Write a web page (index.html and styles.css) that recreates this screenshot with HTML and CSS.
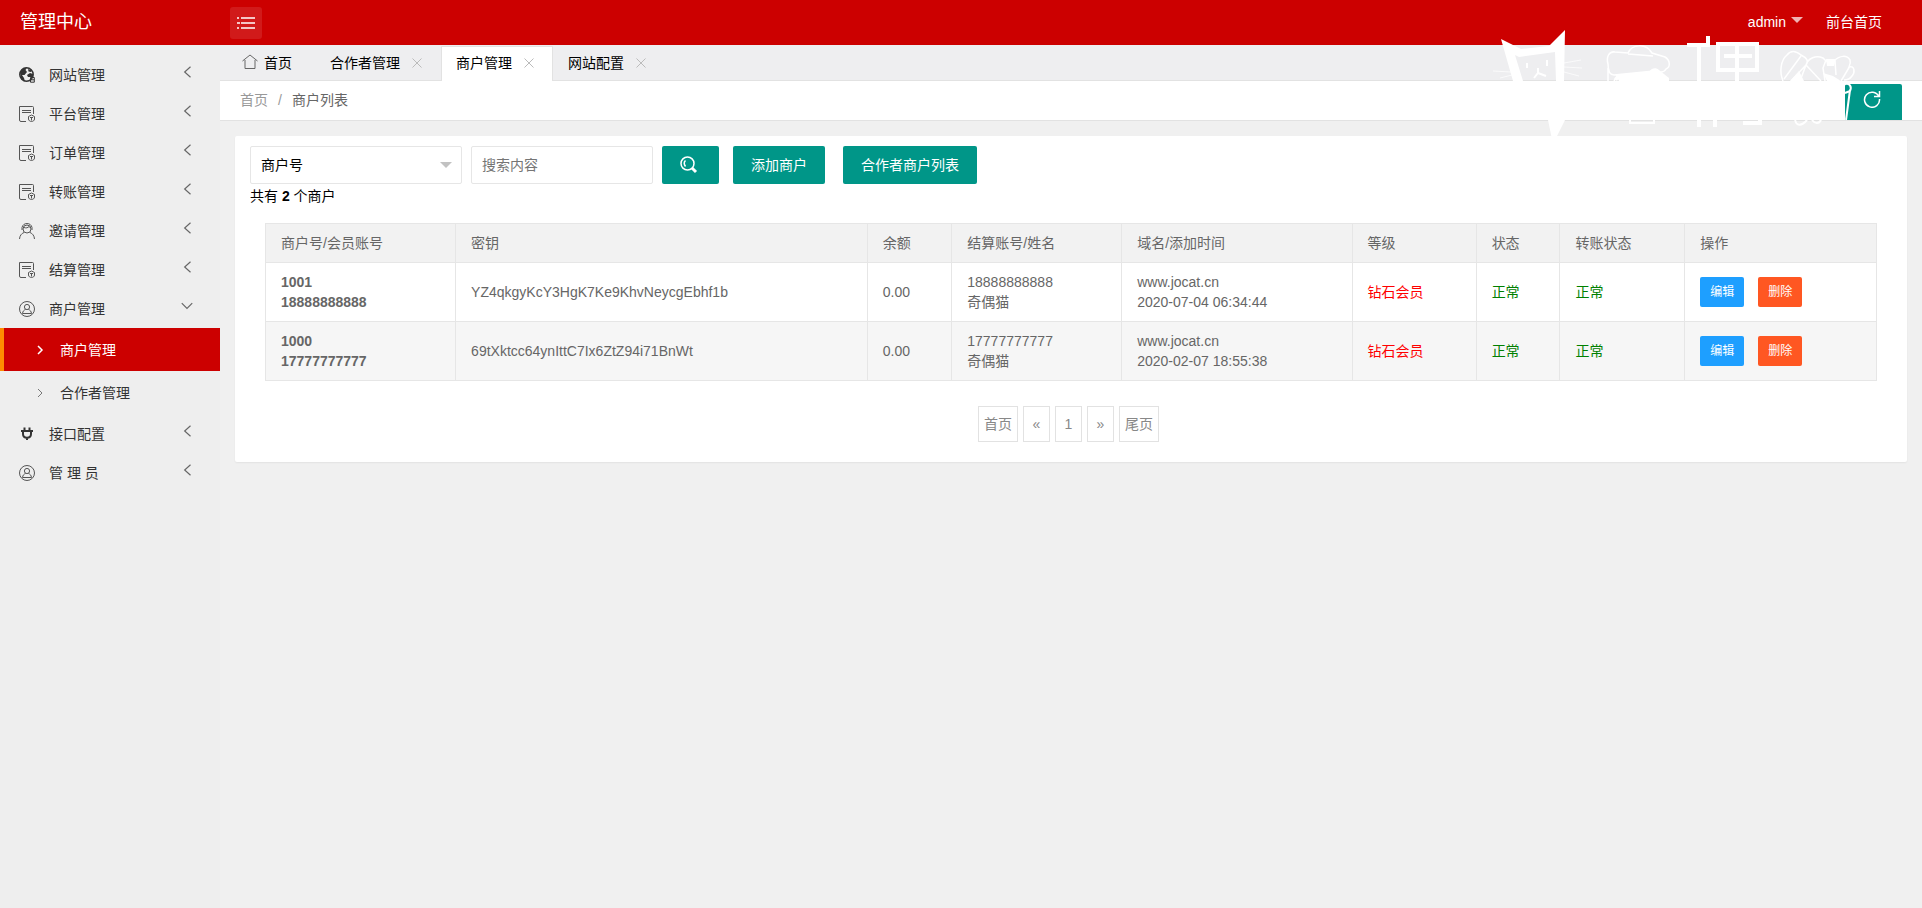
FILE: index.html
```html
<!DOCTYPE html>
<html lang="zh-CN">
<head>
<meta charset="utf-8">
<title>管理中心</title>
<link rel="stylesheet" href="styles.css">
</head>
<body>
<svg class="defs" width="0" height="0" aria-hidden="true">
  <symbol id="i-form" viewBox="0 0 16 16"><path d="M7 15.500H2A1.500 1.500 0 0 1 .5 14V.5h13a1 1 0 0 1 1 1V8M3 4.500h9M3 6.500h9"/><path d="M9.500 10.500 12.500 9l3 1.500v2.500c0 1.500-1.500 2.500-3 2.500s-3-1-3-2.500zM11 11.500h3M12.500 11.500v3"/></symbol>
  <symbol id="i-user" viewBox="0 0 16 16"><circle cx="8" cy="8" r="7.500"/><circle cx="8" cy="6" r="2.600"/><path d="M3.500 12.500c.3-2.300 1.500-3.500 3-4M12.500 12.500c-.3-2.300-1.500-3.500-3-4M3.500 12.500h9"/></symbol>
  <symbol id="i-left" viewBox="0 0 12 12"><path d="M9 1.500 4 6l5 4.500"/></symbol>
  <symbol id="i-down" viewBox="0 0 12 12"><path d="M1.500 3.500 6 8l4.500-4.500"/></symbol>
  <symbol id="i-right" viewBox="0 0 12 12"><path d="M4 2l4 4-4 4"/></symbol>
  <symbol id="i-close" viewBox="0 0 10 10"><path d="M.5.5l9 9M9.500.5l-9 9"/></symbol>
</svg>
<header class="header">
  <a class="logo" href="#">管理中心</a>
  <button class="menu-toggle" type="button" aria-label="切换菜单"><svg width="18" height="12" viewBox="0 0 18 12"><path d="M0 1h2M4 1h14M0 6h3M4 6h14M0 11h2M4 11h14"/></svg></button>
  <nav class="header-nav">
    <a class="account" href="#">admin<span class="caret caret-light"></span></a>
    <a href="#">前台首页</a>
  </nav>
</header>
<div class="shell">
  <nav class="sidebar">
    <a class="item" href="#"><svg class="icon dark" viewBox="0 0 16 16"><circle cx="7.500" cy="7.500" r="6.700" stroke-width="1.500"/><path class="solid" d="M1 5l3-3.500L8 .5 6.500 3 8 5 5.500 8 3 8 5 11l1 3.500L2 12zM9 2l4 1.500L12 5 9.500 4.500zM8 8l3-2 3 1v3H9z"/><path d="M11.500 10.500h3.800v4.700h-3.800zM12 12.800h3"/></svg><span>网站管理</span><svg class="arrow"><use href="#i-left"/></svg></a>
    <a class="item" href="#"><svg class="icon"><use href="#i-form"/></svg><span>平台管理</span><svg class="arrow"><use href="#i-left"/></svg></a>
    <a class="item" href="#"><svg class="icon"><use href="#i-form"/></svg><span>订单管理</span><svg class="arrow"><use href="#i-left"/></svg></a>
    <a class="item" href="#"><svg class="icon"><use href="#i-form"/></svg><span>转账管理</span><svg class="arrow"><use href="#i-left"/></svg></a>
    <a class="item" href="#"><svg class="icon" viewBox="0 0 16 16"><path d="M.5 16c.3-3.500 2-5.500 4.500-6.500M15.500 16c-.3-3.500-2-5.500-4.500-6.500"/><circle cx="8" cy="6" r="4"/><path d="M3 7V4.500C3.500 2 5.500.5 8 .5s4.500 1.500 5 4V7M5 4.500c2 .8 4 .3 5-1l1.500 1.500"/></svg><span>邀请管理</span><svg class="arrow"><use href="#i-left"/></svg></a>
    <a class="item" href="#"><svg class="icon"><use href="#i-form"/></svg><span>结算管理</span><svg class="arrow"><use href="#i-left"/></svg></a>
    <a class="item" href="#"><svg class="icon"><use href="#i-user"/></svg><span>商户管理</span><svg class="arrow"><use href="#i-down"/></svg></a>
    <a class="subitem current" href="#"><svg class="chevron"><use href="#i-right"/></svg><span>商户管理</span></a>
    <a class="subitem" href="#"><svg class="chevron"><use href="#i-right"/></svg><span>合作者管理</span></a>
    <a class="item" href="#"><svg class="icon dark" viewBox="0 0 16 16"><path class="plug" d="M2 5h12M5.500 1.500V5M10.500 1.500V5M4 5v3c0 2.500 1.500 3.700 4 3.700s4-1.200 4-3.700V5M8 11.500V14"/></svg><span>接口配置</span><svg class="arrow"><use href="#i-left"/></svg></a>
    <a class="item" href="#"><svg class="icon"><use href="#i-user"/></svg><span>管 理 员</span><svg class="arrow"><use href="#i-left"/></svg></a>
  </nav>
  <main class="main">
    <div class="tabs">
      <a class="tab tab-home" href="#"><svg class="home" viewBox="0 0 16 16"><path d="M.5 7 8 1l7.500 6M3 6v8.500h10V6"/></svg>首页</a>
      <a class="tab" href="#">合作者管理<svg class="close"><use href="#i-close"/></svg></a>
      <a class="tab active" href="#">商户管理<svg class="close"><use href="#i-close"/></svg></a>
      <a class="tab" href="#">网站配置<svg class="close"><use href="#i-close"/></svg></a>
    </div>
    <div class="crumbs">
      <a href="#">首页</a><span class="slash">/</span><span class="here">商户列表</span>
      <button class="btn refresh" type="button" aria-label="刷新"><svg width="18" height="18" viewBox="0 0 18 18"><path d="M15.800 6.500A7.500 7.500 0 1 0 16.500 9M16.500 1v5.500H11"/></svg></button>
    </div>
    <section class="card">
      <form class="search">
        <span class="select-wrap"><select aria-label="搜索类型"><option>商户号</option></select><span class="caret"></span></span>
        <input type="text" placeholder="搜索内容" aria-label="搜索内容">
        <button class="btn btn-search" type="button" aria-label="搜索"><svg width="18" height="18" viewBox="0 0 18 18"><circle cx="7.500" cy="7.500" r="6.500"/><path d="M5.500 4.500C4 6 4 8.500 5.500 10.500"/><path class="handle" d="M12 12l4 4"/></svg></button>
        <button class="btn btn-add" type="button">添加商户</button>
        <button class="btn btn-list" type="button">合作者商户列表</button>
      </form>
      <p class="total">共有 <b>2</b> 个商户</p>
      <table>
        <colgroup><col class="c-id"><col class="c-key"><col class="c-money"><col class="c-account"><col class="c-domain"><col class="c-level"><col class="c-state"><col class="c-transfer"><col></colgroup>
        <thead><tr><th>商户号/会员账号</th><th>密钥</th><th>余额</th><th>结算账号/姓名</th><th>域名/添加时间</th><th>等级</th><th>状态</th><th>转账状态</th><th>操作</th></tr></thead>
        <tbody>
          <tr><td><b>1001<br>18888888888</b></td><td>YZ4qkgyKcY3HgK7Ke9KhvNeycgEbhf1b</td><td>0.00</td><td>18888888888<br>奇偶猫</td><td>www.jocat.cn<br>2020-07-04 06:34:44</td><td class="red">钻石会员</td><td class="green">正常</td><td class="green">正常</td><td><div class="ops"><button class="op edit" type="button">编辑</button><button class="op delete" type="button">删除</button></div></td></tr>
          <tr><td><b>1000<br>17777777777</b></td><td>69tXktcc64ynIttC7Ix6ZtZ94i71BnWt</td><td>0.00</td><td>17777777777<br>奇偶猫</td><td>www.jocat.cn<br>2020-02-07 18:55:38</td><td class="red">钻石会员</td><td class="green">正常</td><td class="green">正常</td><td><div class="ops"><button class="op edit" type="button">编辑</button><button class="op delete" type="button">删除</button></div></td></tr>
        </tbody>
      </table>
      <nav class="pager" aria-label="分页"><a href="#">首页</a><a href="#">«</a><a href="#">1</a><a href="#">»</a><a href="#">尾页</a></nav>
    </section>
  </main>
</div>
<svg class="mascot" width="372" height="130" viewBox="0 0 372 130" aria-hidden="true">
  <path class="fill" fill-rule="evenodd" d="M11 19 31 29 59 26 75 10 74 61 75 100 63 124 58 100 40 64 23 61zM25 35 33 61H66L65 32 29 37z"/>
  <path class="hair" d="M3 51l18 1M10 58l12-3M74 43l17-3M74 47l18 1M74 52l15 4"/>
  <path class="pen" d="M37 43v5M57 40v6M48 48v5M44 58l4-5 8 3"/>
  <path class="pen thin" d="M118 44c-2-7 1-13 7-12l13 1c4-9 18-10 24 0l13 4c5 3 6 10 1 12-2 4-9 4-12 2l-40 4c-5 0-6-5-6-11zM138 34l25 2M118 48v13M124 61l3-5 32-3"/>
  <path class="fill" d="M126 55l33-3c2-4 7-5 10-2l10 8v3h-50zM124 58l6-2-3 5z"/>
  <path class="pen" d="M140 99v4h24v-4"/>
  <path class="stroke" d="M197 25h21M218 16v11M209 25v82M228 24h39v26h-39zM247 24v37M234 36h28M225 100v7M253 103h17v-6"/>
  <path class="pen thin" d="M293 61c-4-10-2-21 4-26 4-5 9-4 14 0 6 3 8 6 5 10l-15 16M311 36l-17 23M316 45c2-7 10-10 17-7l3 3h8c6-6 13-6 16-1 1 3 0 5-1 7 6-2 6 6 3 9-2 3-4 4-8 4M316 45l15 16M316 45l-6 16M336 40l-3 8 2 13M345 41l1 14M360 46l-9 15"/>
  <path class="fill" d="M336 39h10l-2 7h-7zM300 61l9-10 5 10zM333 53l4 8h14l-8-5z"/>
  <path class="pen" d="M355 64c5-1 7 3 5 7l-5 2M360 70l-4 30M305 99c1 8 7 7 12 1M322 100c3 4 7 4 9 0"/>
</svg>
</body>
</html>
```
FILE: styles.css
```css
* { box-sizing: border-box; }
body {
  margin: 0;
  min-height: 100vh;
  display: flex;
  flex-direction: column;
  background: #f0f0f0;
  color: #000;
  font: 14px/24px "Liberation Sans", "Noto Sans CJK SC", sans-serif;
}
a { color: inherit; text-decoration: none; }
button, input, select { font: inherit; }
svg { fill: none; stroke: currentColor; flex: none; }
.defs { position: absolute; }

.header { display: flex; align-items: center; height: 45px; background: #c00; color: #fff; }
.logo { width: 230px; padding: 0 20px 2px; font-size: 18px; }
.menu-toggle {
  display: flex; align-items: center; justify-content: center;
  width: 32px; height: 32px; padding: 0; border: 0; border-radius: 3px;
  background: rgba(255, 255, 255, .1); color: #fff;
}
.header-nav { display: flex; gap: 23px; margin-left: auto; padding: 0 40px 2px 0; }
.account { display: flex; gap: 5px; }
.caret { width: 0; height: 0; border: 6px solid transparent; border-top-color: #c2c2c2; border-bottom: 0; }
.caret-light { margin-top: 7px; border-top-color: rgba(255, 255, 255, .7); }

.shell { display: flex; flex: 1; }
.sidebar { width: 220px; flex: none; padding-top: 10px; background: #eee; color: #333; }
.item { display: flex; align-items: center; height: 39px; padding: 0 26px 0 19px; }
.icon { width: 16px; height: 16px; margin-right: 14px; color: #555; }
.dark { color: #333; }
.solid { fill: currentColor; stroke: none; }
.plug { stroke-width: 2; }
.arrow { width: 14px; height: 14px; margin: 0 0 6px auto; color: #666; }
.subitem { display: flex; align-items: center; height: 43px; padding-left: 30px; border-left: 4px solid transparent; }
.chevron { width: 12px; height: 12px; margin-right: 14px; color: #777; }
.current { border-color: #ff8c00; background: #c00; color: #fff; }
.current .chevron { color: #fff; stroke-width: 1.5; }

.main { flex: 1; min-width: 0; }
.tabs { display: flex; height: 36px; padding: 1px 7px 0; background: #eeeef0; border-bottom: 1px solid #e2e2e2; }
.tab { display: flex; align-items: center; height: 35px; padding: 0 19px 2px 15px; }
.tab-home { padding-right: 23px; }
.home { width: 16px; height: 16px; margin: 0 6px 2px 0; color: #666; }
.close { width: 10px; height: 10px; margin-left: 12px; color: #bbb; }
.active { background: #fff; border: 1px solid #e2e2e2; border-bottom: 0; padding: 0 18px 2px 14px; }
.crumbs { display: flex; align-items: center; height: 40px; padding: 0 20px; background: #fff; border-bottom: 1px solid #e2e2e2; color: #999; line-height: 22px; }
.crumbs > a, .crumbs > span { padding-bottom: 2px; }
.slash { margin: 0 10px; }
.here { color: #666; }
.btn {
  display: flex; align-items: center; justify-content: center;
  height: 38px; padding: 0 18px; border: 0; border-radius: 2px;
  background: #009688; color: #fff; white-space: nowrap;
}
.refresh { width: 57px; height: 36px; align-self: flex-end; margin-left: auto; padding: 0 21px 6px 18px; border-radius: 2px 2px 0 0; }
.refresh svg, .menu-toggle svg { stroke-width: 1.5; }

.card { margin: 15px; padding: 10px 15px 20px; background: #fff; border-radius: 2px; box-shadow: 0 1px 2px rgba(0, 0, 0, .06); }
.search { display: flex; gap: 9px; }
.select-wrap { position: relative; width: 212px; }
.select-wrap .caret { position: absolute; right: 10px; top: 16px; pointer-events: none; }
select, input { width: 182px; height: 38px; padding: 0 10px; border: 1px solid #e6e6e6; border-radius: 2px; background: #fff; color: #000; }
select { width: 100%; appearance: none; }
input::placeholder { color: #757575; }
.btn-search { width: 57px; padding: 0 21px 0 18px; stroke-width: 1.5; }
.handle { stroke-width: 3; }
.btn-add { margin-left: 5px; }
.btn-list { margin-left: 9px; }
.total { margin: 0 0 15px; }

table { width: calc(100% - 30px); margin: 0 15px; border-collapse: collapse; table-layout: fixed; color: #666; line-height: 20px; }
th, td { padding: 9px 15px; border: 1px solid #e6e6e6; text-align: left; font-weight: 400; }
th { background: #f2f2f2; }
tbody tr:nth-child(2) { background: #f6f6f6; }
.c-id { width: 11.8%; }
.c-key { width: 25.55%; }
.c-money { width: 5.25%; }
.c-account { width: 10.55%; }
.c-domain { width: 14.3%; }
.c-level { width: 7.7%; }
.c-state { width: 5.2%; }
.c-transfer { width: 7.75%; }
.red { color: #f00; }
.green { color: #008000; }
.ops { display: flex; gap: 14px; }
.op { height: 30px; padding: 0 10px; border: 0; border-radius: 2px; color: #fff; font-size: 12px; }
.edit { background: #1e9fff; }
.delete { background: #ff5722; }

.pager { display: flex; justify-content: center; margin-top: 25px; color: #888; }
.pager a { min-width: 27px; height: 36px; margin-right: 5px; padding: 0 5px; border: 1px solid #e2e2e2; line-height: 34px; text-align: center; }

.mascot { position: absolute; top: 20px; right: 60px; color: #fff; pointer-events: none; }
.mascot .fill { fill: #fff; stroke: none; }
.mascot .hair { stroke-width: 1; opacity: .7; }
.mascot .pen { stroke-width: 2; }
.mascot .thin { stroke-width: 1.5; }
.mascot .stroke { stroke-width: 4; }
```
